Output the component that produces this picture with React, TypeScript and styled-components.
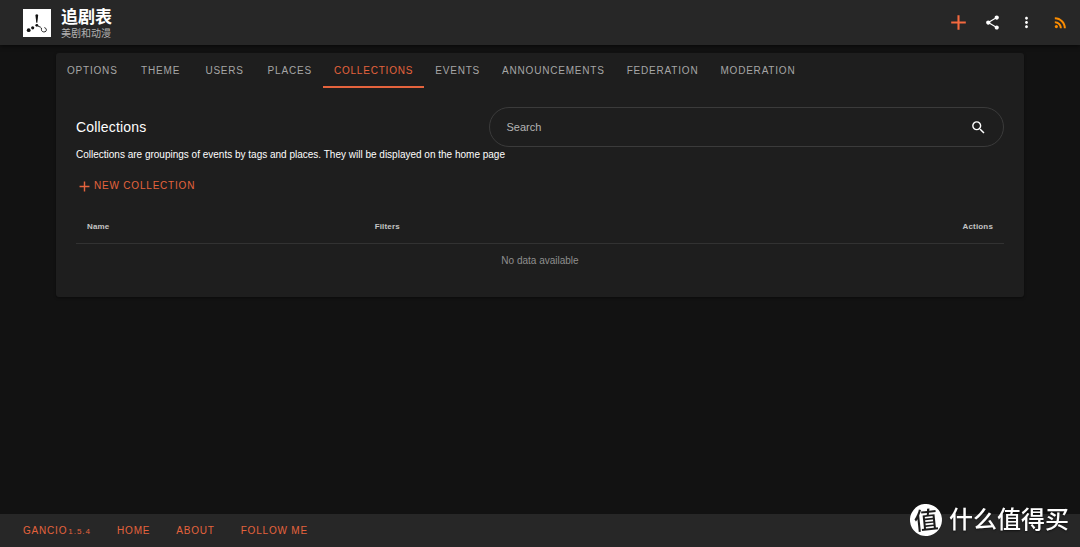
import React from 'react';
import styled, { createGlobalStyle } from 'styled-components';
import { MdAdd, MdMoreVert, MdRssFeed, MdSearch, MdShare } from 'react-icons/md';

const accent = '#e5633d';

const GlobalStyle = createGlobalStyle`
  *, *::before, *::after { box-sizing: border-box; }
  body {
    margin: 0;
    background: #121212;
    color: #fff;
    font: 10px/16px "Liberation Sans", "Noto Sans CJK SC", Arial, sans-serif;
  }
`;

const Page = styled.div`
  display: flex;
  flex-direction: column;
  min-height: 100vh;
`;

const AppBar = styled.header`
  display: flex;
  align-items: center;
  height: 45px;
  padding: 0 3px 0 23px;
  background: #272727;
  box-shadow: 0 1px 4px rgba(0, 0, 0, 0.6);
`;

const Brand = styled.a`
  display: flex;
  align-items: center;
  gap: 10px;
  color: #fff;
  text-decoration: none;
`;

const Logo = styled.svg`
  width: 28px;
  height: 28px;
  background: #fff;
`;

const BrandText = styled.span`
  display: flex;
  flex-direction: column;
  padding-top: 4px;
`;

const SiteName = styled.strong`
  font-size: 17px;
  line-height: 18px;
  font-weight: 700;
`;

const Tagline = styled.small`
  font-size: 10px;
  line-height: 14px;
  color: #b3b3b3;
`;

const Actions = styled.nav`
  display: flex;
  margin-left: auto;
`;

const IconButton = styled.button<{ $color?: string }>`
  display: flex;
  align-items: center;
  justify-content: center;
  width: 34px;
  height: 34px;
  padding: 0;
  border: 0;
  background: none;
  color: ${(p) => p.$color ?? '#fff'};
  cursor: pointer;
`;

const Main = styled.main`
  flex: 1;
  padding: 8px 56px;
`;

const Card = styled.section`
  border-radius: 3px;
  background: #1e1e1e;
  box-shadow: 0 1px 3px rgba(0, 0, 0, 0.4);
`;

const Tabs = styled.div`
  display: flex;
`;

const Tab = styled.button<{ $active: boolean }>`
  min-width: 64px;
  height: 35px;
  padding: 2px 11px 0;
  border: 0;
  border-bottom: 2px solid ${(p) => (p.$active ? accent : 'transparent')};
  background: none;
  color: ${(p) => (p.$active ? accent : '#a6a6a6')};
  font: inherit;
  letter-spacing: 0.08em;
  text-transform: uppercase;
  cursor: pointer;
`;

const Panel = styled.div`
  padding: 19px 20px;
`;

const TitleRow = styled.div`
  display: grid;
  grid-template-columns: 4fr 5fr;
  align-items: center;
`;

const Title = styled.h1`
  margin: 0;
  font-size: 14px;
  line-height: 20px;
  font-weight: 400;
  letter-spacing: 0.0125em;
`;

const SearchBox = styled.div`
  display: flex;
  align-items: center;
  height: 40px;
  margin-left: 1px;
  padding: 0 16px;
  border: 1px solid #3b3b3b;
  border-radius: 20px;
`;

const SearchInput = styled.input`
  flex: 1;
  min-width: 0;
  padding: 0;
  border: 0;
  outline: 0;
  background: none;
  color: #fff;
  font: inherit;
  font-size: 11px;

  &::placeholder { color: #b4b4b4; opacity: 1; }
`;

const Description = styled.p`
  margin: 0;
`;

const NewButton = styled.button`
  display: flex;
  align-items: center;
  gap: 1px;
  height: 26px;
  margin: 10px 0;
  padding: 0;
  border: 0;
  background: none;
  color: ${accent};
  font: inherit;
  letter-spacing: 0.08em;
  text-transform: uppercase;
  cursor: pointer;
`;

const Table = styled.table`
  width: 100%;
  border-collapse: collapse;
  table-layout: fixed;
`;

const HeadCell = styled.th<{ $width?: string; $align?: string }>`
  width: ${(p) => p.$width ?? 'auto'};
  height: 34px;
  padding: 2px 11px 0;
  border-bottom: 1px solid #323232;
  color: #c4c4c4;
  font-size: 8px;
  letter-spacing: 0.02em;
  text-align: ${(p) => p.$align ?? 'left'};
`;

const EmptyCell = styled.td`
  height: 35px;
  padding: 0 11px;
  color: #8e8e8e;
  text-align: center;
`;

const Footer = styled.footer`
  display: flex;
  align-items: center;
  gap: 26px;
  height: 33px;
  padding: 0 23px;
  background: #272727;
`;

const FooterLink = styled.a`
  color: ${accent};
  letter-spacing: 0.08em;
  text-decoration: none;
  text-transform: uppercase;

  small {
    margin-left: 1px;
    font-size: 8px;
    line-height: 1;
    letter-spacing: 1px;
  }
`;

const Watermark = styled.div`
  position: fixed;
  right: 11px;
  bottom: 11px;
  display: flex;
  align-items: center;
  gap: 7px;
  font: 500 24px/32px "Noto Sans CJK SC", sans-serif;
  text-shadow: 0 1px 2px rgba(0, 0, 0, 0.6);
`;

const WatermarkText = styled.span`
  line-height: 28px;
  padding-bottom: 4px;
`;

const Seal = styled.span`
  width: 32px;
  height: 32px;
  border-radius: 50%;
  background: #fff;
  color: #1c1c1c;
  font-size: 24px;
  line-height: 30px;
  text-align: center;
  text-shadow: none;
  transform: rotate(-6deg);
`;

const tabs = [
  'Options', 'Theme', 'Users', 'Places', 'Collections',
  'Events', 'Announcements', 'Federation', 'Moderation',
];

export default function App() {
  return (
    <Page>
      <GlobalStyle />
      <AppBar>
        <Brand href="#">
          <Logo viewBox="0 0 28 28" aria-hidden="true">
            <path d="M12.4 6Q13.8 4.4 15.2 6L14.3 13.8H13.3Z" fill="#111" />
            <circle cx="13.8" cy="16.3" r="1.4" fill="#111" />
            <circle cx="9.7" cy="18.8" r="1.6" fill="#111" />
            <circle cx="5.7" cy="21.2" r="1.9" fill="#111" />
            <path d="M14.5 16.8L17.5 18.2Q18.8 18.8 18.4 20.3C18 23.6 23.6 23.8 23.4 20.8Q23.2 19 21.4 18.6" fill="none" stroke="#222" />
          </Logo>
          <BrandText>
            <SiteName>追剧表</SiteName>
            <Tagline>美剧和动漫</Tagline>
          </BrandText>
        </Brand>
        <Actions aria-label="Site">
          <IconButton aria-label="Add event" $color="#f4693f"><MdAdd size={25} /></IconButton>
          <IconButton aria-label="Share"><MdShare size={17} /></IconButton>
          <IconButton aria-label="More"><MdMoreVert size={17} /></IconButton>
          <IconButton aria-label="Feed" $color="#fb8c00"><MdRssFeed size={17} /></IconButton>
        </Actions>
      </AppBar>

      <Main>
        <Card>
          <Tabs role="tablist">
            {tabs.map((name) => (
              <Tab key={name} role="tab" aria-selected={name === 'Collections'} $active={name === 'Collections'}>
                {name}
              </Tab>
            ))}
          </Tabs>
          <Panel role="tabpanel">
            <TitleRow>
              <Title>Collections</Title>
              <SearchBox>
                <SearchInput type="text" placeholder="Search" aria-label="Search" />
                <MdSearch size={17} />
              </SearchBox>
            </TitleRow>
            <Description>
              Collections are groupings of events by tags and places. They will be displayed on the home page
            </Description>
            <NewButton><MdAdd size={17} />New collection</NewButton>
            <Table>
              <thead>
                <tr>
                  <HeadCell $width="31%">Name</HeadCell>
                  <HeadCell>Filters</HeadCell>
                  <HeadCell $width="20%" $align="right">Actions</HeadCell>
                </tr>
              </thead>
              <tbody>
                <tr><EmptyCell colSpan={3}>No data available</EmptyCell></tr>
              </tbody>
            </Table>
          </Panel>
        </Card>
      </Main>

      <Footer>
        <FooterLink href="#">Gancio<small>1.5.4</small></FooterLink>
        <FooterLink href="#">Home</FooterLink>
        <FooterLink href="#">About</FooterLink>
        <FooterLink href="#">Follow me</FooterLink>
      </Footer>

      <Watermark>
        <Seal>值</Seal>
        <WatermarkText>什么值得买</WatermarkText>
      </Watermark>
    </Page>
  );
}
